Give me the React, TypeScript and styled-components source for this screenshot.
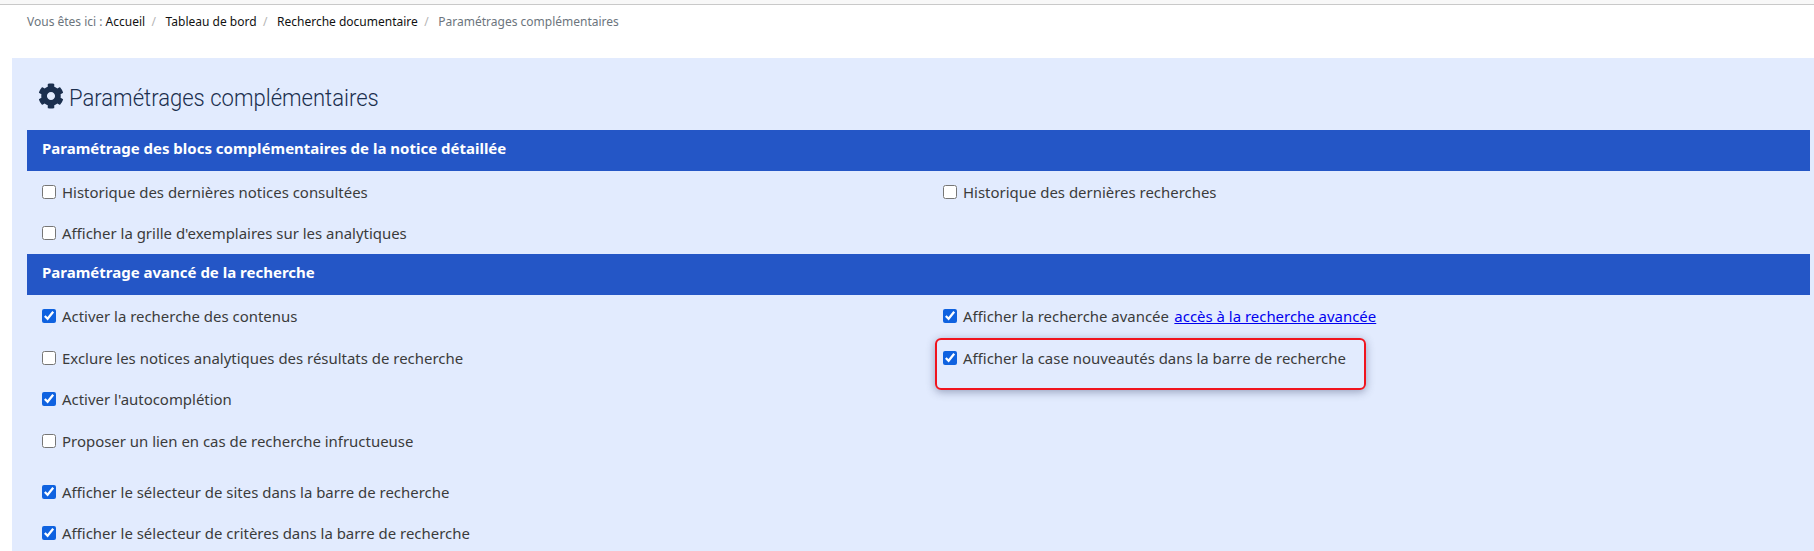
import React from "react";
import styled, { createGlobalStyle } from "styled-components";
import { FaCog } from "react-icons/fa";

const Global = createGlobalStyle`
  html, body { margin: 0; padding: 0; background: #fff; }
  body { font-family: "Noto Sans", "Open Sans", sans-serif; color: #3a3a3a; }
`;
const Page = styled.div`height: 551px; overflow: hidden;`;
const TopStrip = styled.div`height: 4px; background: #f8f8f8; border-bottom: 1px solid #c9c9c9;`;
const Crumbs = styled.nav`
  display: flex; align-items: center; height: 33px; padding-left: 27px;
  font-size: 12px; color: #6c757d;
`;
const CrumbLink = styled.a`color: #111; margin-left: 3px;`;
const CrumbCurrent = styled.span`margin-left: 3px;`;
const Sep = styled.span`color: #b5b5b5; margin: 0 6.5px;`;
const Panel = styled.main`
  margin: 20px 0 0 12px; padding: 0 4px 0 15px; background: #e2ebfe; height: 500px;
`;
const Title = styled.h1`
  display: flex; align-items: center; gap: 5px; height: 72px; margin: 0; padding: 4px 0 0 11px; box-sizing: border-box;
  font-family: "Roboto", sans-serif; font-weight: 300; font-size: 24.5px; color: #1b2f4e;
`;
const TitleText = styled.span`display: inline-block; padding-top: 2px; transform: scaleX(0.9); transform-origin: left center;`;
const Bar = styled.h2`
  margin: 0; height: 41px; line-height: 37px; padding-left: 15px;
  background: #2456c6; color: #fff; font-size: 15px; font-weight: 700;
`;
const Grid = styled.div`display: grid; grid-template-columns: 901px 1fr;`;
const Cell = styled.label<{ $h?: number; $gapTop?: number }>`
  position: relative; display: flex; align-items: center; gap: 6px; padding-left: 15px;
  height: ${(p) => p.$h ?? 41}px; margin-top: ${(p) => p.$gapTop ?? 0}px;
  font-size: 14.95px; color: #3b3b3b;
`;
const Box = styled.input.attrs({ type: "checkbox" })`
  width: 14px; height: 14px; margin: 0; accent-color: #0f62e0;
`;
const DocLink = styled.a`color: #0000ee; text-decoration: underline; margin-left: 1.5px;`;
const Highlight = styled.span`
  position: absolute; left: 7px; top: 1px; width: 427px; height: 48px;
  border: 2px solid #f0141e; border-radius: 6px; box-shadow: 0 2px 8px rgba(60, 70, 110, 0.45);
`;

const Opt = ({ on, children, ...r }: { on?: boolean; children: React.ReactNode; $h?: number; $gapTop?: number }) => (
  <Cell {...r}><Box defaultChecked={on} /><span>{children}</span></Cell>
);

export default function App() {
  return (
    <Page>
      <Global />
      <TopStrip />
      <Crumbs>
        Vous êtes ici : <CrumbLink>Accueil</CrumbLink><Sep>/</Sep>
        <CrumbLink>Tableau de bord</CrumbLink><Sep>/</Sep>
        <CrumbLink>Recherche documentaire</CrumbLink><Sep>/</Sep>
        <CrumbCurrent>Paramétrages complémentaires</CrumbCurrent>
      </Crumbs>
      <Panel>
        <Title><FaCog size={26} /><TitleText>Paramétrages complémentaires</TitleText></Title>
        <Bar>Paramétrage des blocs complémentaires de la notice détaillée</Bar>
        <Grid>
          <Opt>Historique des dernières notices consultées</Opt>
          <Opt>Historique des dernières recherches</Opt>
          <Opt $h={42}>Afficher la grille d'exemplaires sur les analytiques</Opt>
          <span />
        </Grid>
        <Bar>Paramétrage avancé de la recherche</Bar>
        <Grid>
          <Opt on $h={42}>Activer la recherche des contenus</Opt>
          <Opt on $h={42}>Afficher la recherche avancée <DocLink href="#">accès à la recherche avancée</DocLink></Opt>
          <Opt $h={41}>Exclure les notices analytiques des résultats de recherche</Opt>
          <Cell $h={41}><Box defaultChecked /><span>Afficher la case nouveautés dans la barre de recherche</span><Highlight /></Cell>
          <Opt on $h={42}>Activer l'autocomplétion</Opt>
          <span />
          <Opt>Proposer un lien en cas de recherche infructueuse</Opt>
          <span />
          <Opt on $gapTop={10}>Afficher le sélecteur de sites dans la barre de recherche</Opt>
          <span />
          <Opt on>Afficher le sélecteur de critères dans la barre de recherche</Opt>
          <span />
        </Grid>
      </Panel>
    </Page>
  );
}
